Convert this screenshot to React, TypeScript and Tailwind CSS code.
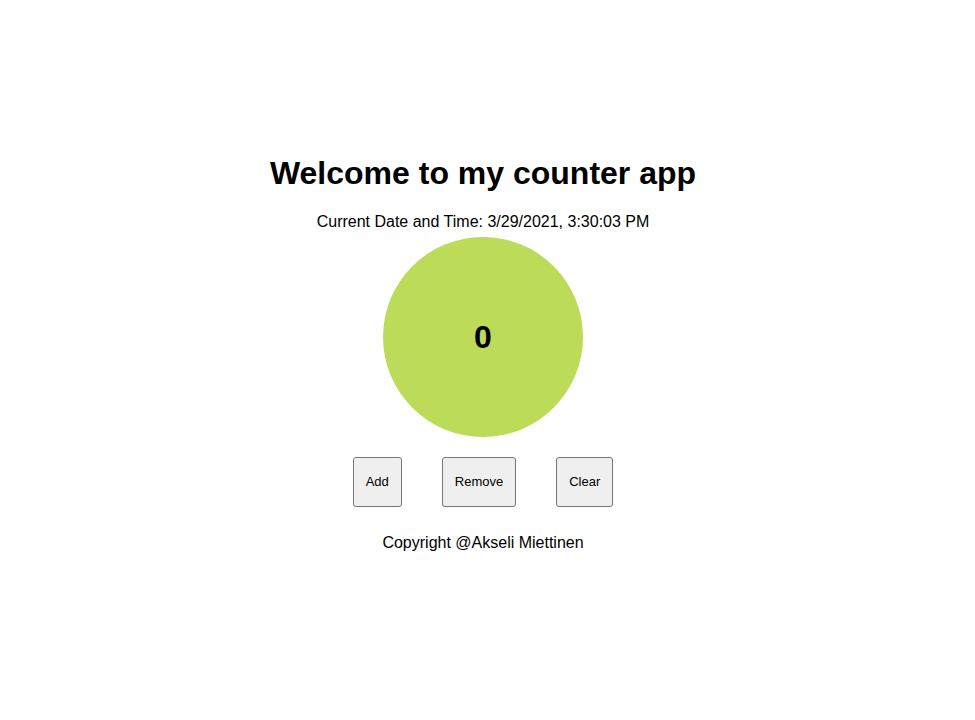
export default function App() {
  return (
    <div className="w-[966px] min-h-[720px] bg-white flex flex-col items-center pt-[155px] text-black" style={{ fontFamily: '"Liberation Sans", Arial, sans-serif' }}>
      <h1 className="text-[32px] font-bold leading-[37px]">Welcome to my counter app</h1>
      <p className="mt-[21px] text-[16px] leading-[18px]">Current Date and Time: 3/29/2021, 3:30:03 PM</p>
      <div className="mt-[6px] w-[200px] h-[200px] rounded-full bg-[#bcdb58] flex items-center justify-center">
        <span className="text-[32px] font-bold leading-[37px]">0</span>
      </div>
      <div className="mt-[20px] flex gap-[40px]">
        <button className="h-[50px] px-[12px] bg-[#efefef] border border-[#767676] rounded-[3px] text-[13px] text-black">Add</button>
        <button className="h-[50px] px-[12px] bg-[#efefef] border border-[#767676] rounded-[3px] text-[13px] text-black">Remove</button>
        <button className="h-[50px] px-[12px] bg-[#efefef] border border-[#767676] rounded-[3px] text-[13px] text-black">Clear</button>
      </div>
      <p className="mt-[27px] text-[16px] leading-[18px]">Copyright @Akseli Miettinen</p>
    </div>
  );
}
